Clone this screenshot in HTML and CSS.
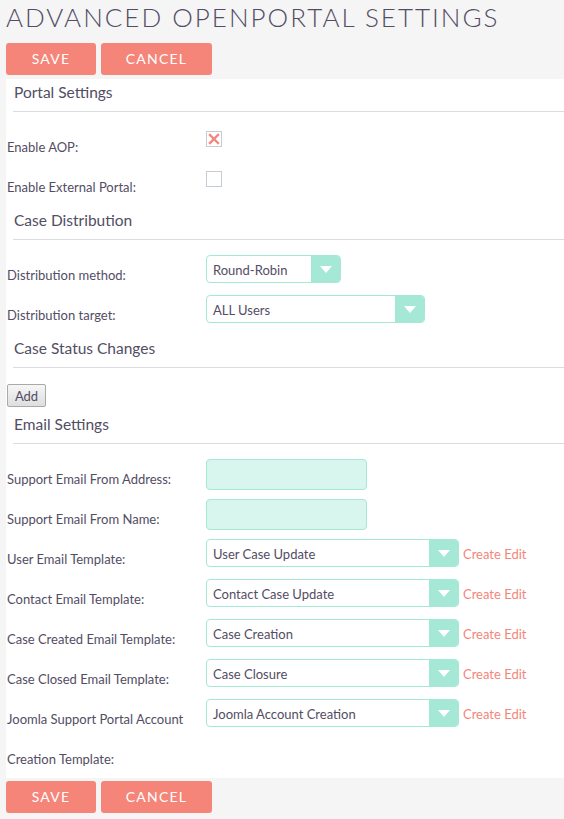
FILE: index.html
```html
<!DOCTYPE html>
<html>
<head>
<meta charset="utf-8">
<link rel="stylesheet" href="styles.css">
</head>
<body>
<div class="page">
  <h1 class="title">ADVANCED OPENPORTAL SETTINGS</h1>
  <div class="actions">
    <button class="btn btn-save">SAVE</button>
    <button class="btn btn-cancel">CANCEL</button>
  </div>
  <div class="panel">
    <div class="section-head">Portal Settings</div>
    <div class="row">
      <div class="label">Enable AOP:</div>
      <div class="field"><span class="check checked"><svg width="12" height="12" viewBox="0 0 12 12"><path d="M2 2 L10 10 M10 2 L2 10" stroke="#f3877d" stroke-width="2.4" stroke-linecap="square"/></svg></span></div>
    </div>
    <div class="row">
      <div class="label">Enable External Portal:</div>
      <div class="field"><span class="check"></span></div>
    </div>

    <div class="section-head">Case Distribution</div>
    <div class="row">
      <div class="label">Distribution method:</div>
      <div class="field"><div class="select w-rr"><span class="sel-text">Round-Robin</span><span class="sel-arrow"></span></div></div>
    </div>
    <div class="row">
      <div class="label">Distribution target:</div>
      <div class="field"><div class="select w-all"><span class="sel-text">ALL Users</span><span class="sel-arrow"></span></div></div>
    </div>

    <div class="section-head">Case Status Changes</div>
    <div class="add-row"><button class="btn-add">Add</button></div>

    <div class="section-head">Email Settings</div>
    <div class="row">
      <div class="label">Support Email From Address:</div>
      <div class="field"><span class="input"></span></div>
    </div>
    <div class="row">
      <div class="label">Support Email From Name:</div>
      <div class="field"><span class="input"></span></div>
    </div>
    <div class="row">
      <div class="label">User Email Template:</div>
      <div class="field"><div class="select w-tpl"><span class="sel-text">User Case Update</span><span class="sel-arrow"></span></div><span class="links"><a>Create</a> <a>Edit</a></span></div>
    </div>
    <div class="row">
      <div class="label">Contact Email Template:</div>
      <div class="field"><div class="select w-tpl"><span class="sel-text">Contact Case Update</span><span class="sel-arrow"></span></div><span class="links"><a>Create</a> <a>Edit</a></span></div>
    </div>
    <div class="row">
      <div class="label">Case Created Email Template:</div>
      <div class="field"><div class="select w-tpl"><span class="sel-text">Case Creation</span><span class="sel-arrow"></span></div><span class="links"><a>Create</a> <a>Edit</a></span></div>
    </div>
    <div class="row">
      <div class="label">Case Closed Email Template:</div>
      <div class="field"><div class="select w-tpl"><span class="sel-text">Case Closure</span><span class="sel-arrow"></span></div><span class="links"><a>Create</a> <a>Edit</a></span></div>
    </div>
    <div class="row row-tall">
      <div class="label label-wrap">Joomla Support Portal Account<br>Creation Template:</div>
      <div class="field"><div class="select w-tpl"><span class="sel-text">Joomla Account Creation</span><span class="sel-arrow"></span></div><span class="links"><a>Create</a> <a>Edit</a></span></div>
    </div>
  </div>
  <div class="actions actions-bottom">
    <button class="btn btn-save">SAVE</button>
    <button class="btn btn-cancel">CANCEL</button>
  </div>
</div>
</body>
</html>
```
FILE: styles.css
```css
html, body {
  margin: 0;
  padding: 0;
  background: #f5f5f5;
}
body {
  font-family: Lato, "Open Sans", sans-serif;
  color: #534d64;
}
.page {
  padding-left: 6px;
  height: 819px;
  overflow: hidden;
}
.title {
  margin: 0;
  padding-top: 2px;
  height: 41px;
  font-size: 26px;
  line-height: 30px;
  font-weight: 300;
  letter-spacing: 2px;
  color: #534d64;
  white-space: nowrap;
}
.actions {
  display: flex;
  gap: 5px;
  height: 32px;
  margin-bottom: 4px;
}
.actions-bottom {
  margin-top: 3px;
}
.btn {
  border: none;
  border-radius: 3px;
  background: #f58579;
  color: #fff;
  font-family: Lato, sans-serif;
  font-size: 14px;
  line-height: 31px;
  letter-spacing: 1.2px;
  height: 32px;
  padding: 0 0 1px 0;
}
.btn-save { width: 90px; }
.btn-cancel { width: 111px; }
.panel {
  background: #fff;
  padding-left: 1px;
  padding-bottom: 0;
  height: 699px;
  box-sizing: border-box;
}
.section-head {
  margin-left: 6px;
  padding-top: 3px;
  padding-bottom: 9px;
  height: 20px;
  line-height: 20px;
  font-size: 15.5px;
  border-bottom: 1px solid #dcdcdc;
  margin-bottom: 15px;
  padding-left: 1px;
}
.row {
  display: grid;
  grid-template-columns: 199px 1fr;
  height: 40px;
}
.row-tall {
  height: 80px;
}
.label {
  font-size: 13px;
  line-height: 18px;
  padding-top: 11px;
  white-space: nowrap;
}
.label-wrap {
  padding-top: 0;
  line-height: 40px;
}
.field {
  display: flex;
  align-items: flex-start;
}
.check {
  width: 14px;
  height: 14px;
  margin-top: 4px;
  border: 1px solid #c5ccd4;
  display: flex;
  align-items: center;
  justify-content: center;
}
.select {
  display: flex;
  height: 28px;
  box-sizing: border-box;
  border: 1px solid #a5e8d6;
  border-radius: 4px;
  background: #fff;
  overflow: hidden;
}
.w-rr { width: 135px; }
.w-all { width: 219px; }
.w-tpl { width: 253px; }
.sel-text {
  flex: 1;
  font-size: 13px;
  line-height: 26px;
  padding-left: 6px;
  padding-top: 1px;
  color: #534d64;
}
.sel-arrow {
  width: 29px;
  background: #a5e8d6;
  position: relative;
}
.sel-arrow::after {
  content: "";
  position: absolute;
  left: 9px;
  top: 10px;
  border-left: 6px solid transparent;
  border-right: 6px solid transparent;
  border-top: 7px solid #fff;
}
.input {
  display: block;
  width: 161px;
  height: 31px;
  box-sizing: border-box;
  border: 1px solid #a5e8d6;
  border-radius: 4px;
  background: #d8f5ee;
}
.links {
  margin-left: 4px;
  font-size: 13px;
  line-height: 28px;
  padding-top: 1px;
  color: #f58579;
}
.add-row {
  height: 28px;
  padding-top: 1px;
  box-sizing: border-box;
}
.btn-add {
  height: 23px;
  width: 39px;
  padding: 0;
  font-family: Lato, sans-serif;
  font-size: 13px;
  color: #534d64;
  border: 1px solid #a9a9a9;
  border-radius: 2px;
  background: linear-gradient(#f6f6f6, #dedede);
}
```
